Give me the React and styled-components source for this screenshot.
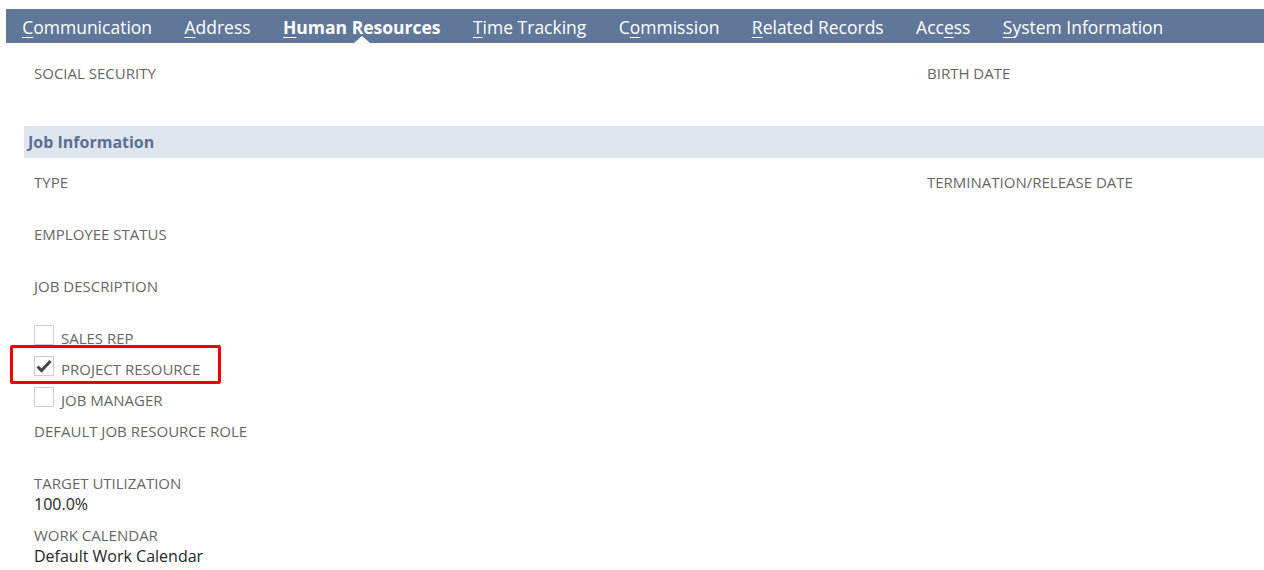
import styled, { createGlobalStyle } from "styled-components";

const GlobalStyle = createGlobalStyle`
    html, body {
        margin: 0;
        padding: 0;
        background: #ffffff;
        font-family: "Open Sans", "Liberation Sans", sans-serif;
    }
`;

const Page = styled.div`
    padding: 9px 0 0 6px;
    width: 1258px;
    overflow: hidden;
`;

const TabBar = styled.nav`
    display: flex;
    height: 34px;
    background: #607799;
`;

const Tab = styled.div`
    position: relative;
    padding: 2px 16.2px 0;
    line-height: 32px;
    font-size: 17.5px;
    color: #ffffff;
    font-weight: ${(p) => (p.$active ? 700 : 400)};
    white-space: nowrap;

    u {
        text-decoration-thickness: 1px;
        text-underline-offset: 3px;
    }

    ${(p) =>
        p.$active &&
        `
        &::after {
            content: "";
            position: absolute;
            left: 50%;
            bottom: 0;
            margin-left: -8px;
            border-left: 8px solid transparent;
            border-right: 8px solid transparent;
            border-bottom: 7px solid #ffffff;
        }
    `}
`;

const Body = styled.div`
    padding-top: 20px;
`;

const Grid = styled.div`
    display: grid;
    grid-template-columns: 893px 1fr;
    padding-left: 28px;
`;

const Column = styled.div`
    display: flex;
    flex-direction: column;
`;

const Field = styled.div`
    display: flex;
    flex-direction: column;
    margin-bottom: 10px;
`;

const Label = styled.div`
    font-size: 15px;
    line-height: 21px;
    color: #666666;
    text-transform: uppercase;
`;

const Value = styled.div`
    font-size: 16px;
    line-height: 21px;
    min-height: 21px;
    color: #262626;
`;

const SectionHeader = styled.div`
    margin: 11px 0 14px 18px;
    height: 32px;
    line-height: 32px;
    background: #dfe5ef;
    padding-left: 4px;
    font-size: 16px;
    font-weight: 700;
    color: #5a6f93;
`;

const CheckGroup = styled.div`
    display: flex;
    flex-direction: column;
    margin: -5px 0 5px;
`;

const CheckRow = styled.div`
    position: relative;
    display: flex;
    align-items: flex-start;
    height: 31px;
`;

const Box = styled.span`
    box-sizing: border-box;
    width: 20px;
    height: 20px;
    margin-top: 1.5px;
    border: 1px solid #cccccc;
    background: #ffffff;
    display: flex;
    align-items: center;
    justify-content: center;
`;

const CheckLabel = styled(Label)`
    line-height: 31px;
    margin-left: 7px;
`;

const Highlight = styled.div`
    position: absolute;
    left: -24px;
    top: -9px;
    width: 211px;
    height: 39px;
    box-sizing: border-box;
    border: 3px solid #ee0000;
    border-radius: 2px;
    pointer-events: none;
`;

const tabs = [
    { pre: "", key: "C", post: "ommunication" },
    { pre: "", key: "A", post: "ddress" },
    { pre: "", key: "H", post: "uman Resources", active: true },
    { pre: "", key: "T", post: "ime Tracking" },
    { pre: "C", key: "o", post: "mmission" },
    { pre: "", key: "R", post: "elated Records" },
    { pre: "Acc", key: "e", post: "ss" },
    { pre: "", key: "S", post: "ystem Information" },
];

const Check = () => (
    <svg width="16" height="14" viewBox="0 0 16 14">
        <path d="M1.5 7.5 L5.5 11.5 L14.5 2" fill="none" stroke="#444" strokeWidth="3" />
    </svg>
);

const CheckItem = ({ label, checked, highlight }) => (
    <CheckRow>
        {highlight && <Highlight />}
        <Box>{checked && <Check />}</Box>
        <CheckLabel>{label}</CheckLabel>
    </CheckRow>
);

const FieldItem = ({ label, value }) => (
    <Field>
        <Label>{label}</Label>
        <Value>{value}</Value>
    </Field>
);

export default function App() {
    return (
        <Page>
            <GlobalStyle />
            <TabBar>
                {tabs.map((t) => (
                    <Tab key={t.post} $active={t.active}>
                        {t.pre}
                        <u>{t.key}</u>
                        {t.post}
                    </Tab>
                ))}
            </TabBar>
            <Body>
                <Grid>
                    <Column>
                        <FieldItem label="Social Security" />
                    </Column>
                    <Column>
                        <FieldItem label="Birth Date" />
                    </Column>
                </Grid>
                <SectionHeader>Job Information</SectionHeader>
                <Grid>
                    <Column>
                        <FieldItem label="Type" />
                        <FieldItem label="Employee Status" />
                        <FieldItem label="Job Description" />
                        <CheckGroup>
                            <CheckItem label="Sales Rep" />
                            <CheckItem label="Project Resource" checked highlight />
                            <CheckItem label="Job Manager" />
                        </CheckGroup>
                        <FieldItem label="Default Job Resource Role" />
                        <FieldItem label="Target Utilization" value="100.0%" />
                        <FieldItem label="Work Calendar" value="Default Work Calendar" />
                    </Column>
                    <Column>
                        <FieldItem label="Termination/Release Date" />
                    </Column>
                </Grid>
            </Body>
        </Page>
    );
}
